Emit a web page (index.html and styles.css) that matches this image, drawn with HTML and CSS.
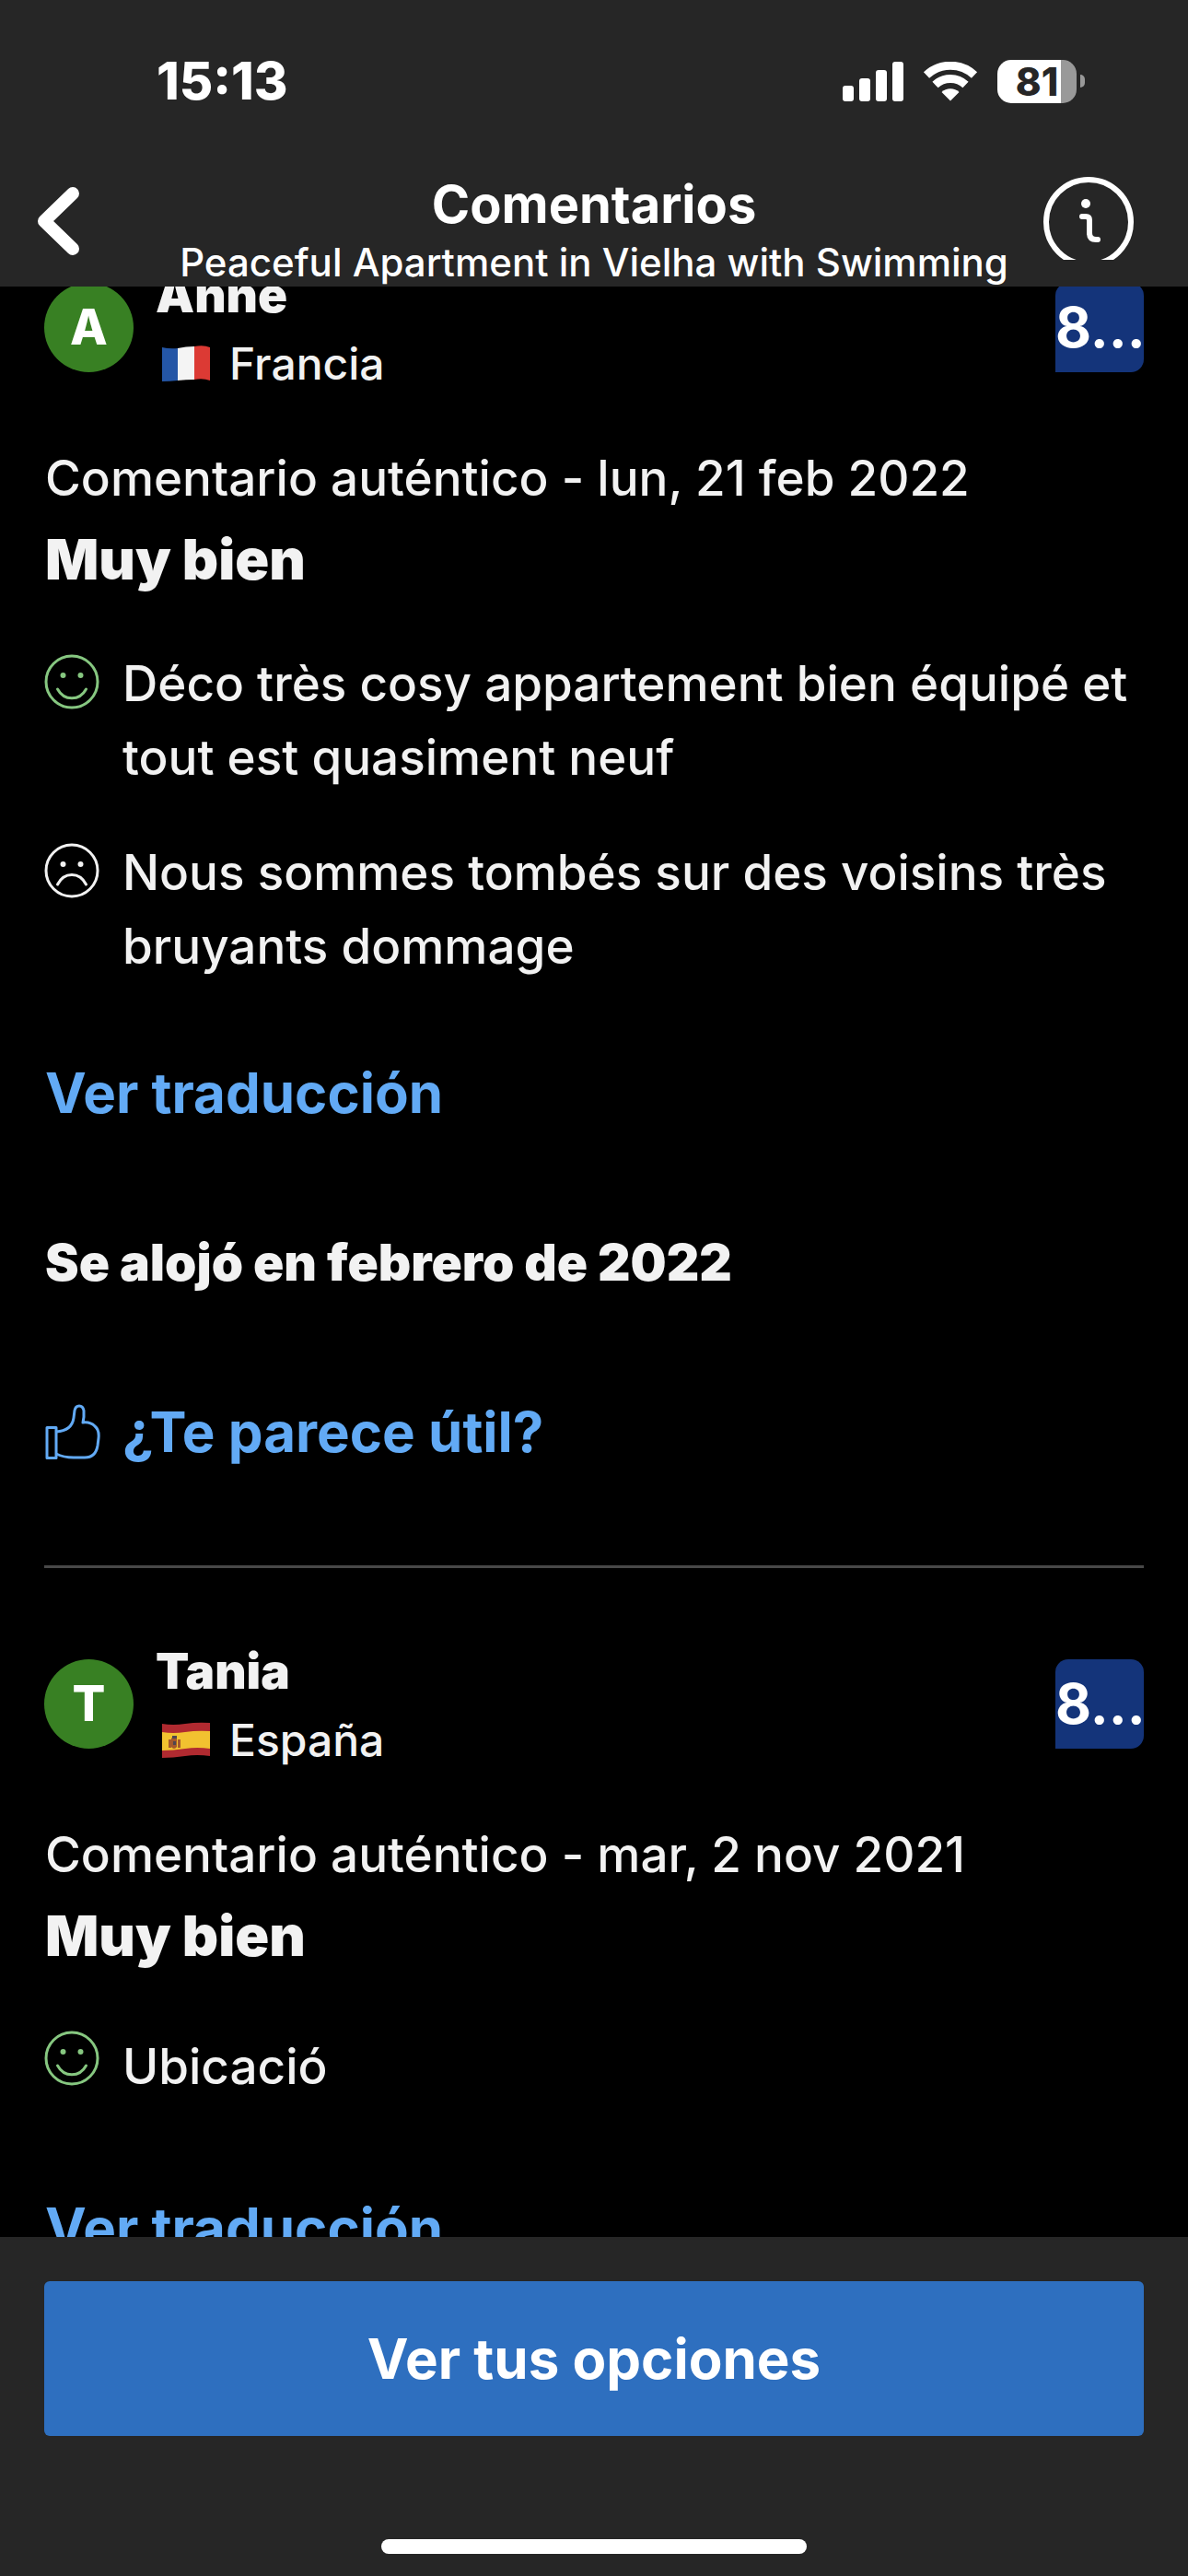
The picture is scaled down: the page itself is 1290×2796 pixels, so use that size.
FILE: index.html
```html
<!DOCTYPE html>
<html lang="es">
<head>
<meta charset="utf-8">
<meta name="viewport" content="width=device-width, initial-scale=1">
<title>Comentarios</title>
<link rel="stylesheet" href="styles.css">
</head>
<body>
<svg class="sprite" aria-hidden="true">
  <symbol id="smile" viewBox="0 0 60 60">
    <g fill="none" stroke="currentColor" stroke-width="3" stroke-linecap="round">
      <circle cx="30" cy="30" r="28"/>
      <path d="M14.500 38c7 13 24 13 31 0"/>
    </g>
    <circle cx="20.500" cy="23" r="3" fill="currentColor"/>
    <circle cx="39.500" cy="23" r="3" fill="currentColor"/>
  </symbol>
  <symbol id="frown" viewBox="0 0 60 60">
    <g fill="none" stroke="currentColor" stroke-width="3" stroke-linecap="round">
      <circle cx="30" cy="30" r="28"/>
      <path d="M14.500 45c7-14 24-14 31 0"/>
    </g>
    <circle cx="20.500" cy="23" r="3" fill="currentColor"/>
    <circle cx="39.500" cy="23" r="3" fill="currentColor"/>
  </symbol>
</svg>

<header class="top">
  <div class="status">
    <span class="status-time">15:13</span>
    <div class="status-icons">
      <svg width="66" height="43" viewBox="0 0 66 43" fill="#fff" aria-hidden="true">
        <rect x="0" y="26" width="12" height="17" rx="3"/>
        <rect x="18" y="18" width="12" height="25" rx="3"/>
        <rect x="36" y="9" width="12" height="34" rx="3"/>
        <rect x="54" y="0" width="12" height="43" rx="3"/>
      </svg>
      <svg width="60" height="43" viewBox="0 0 60 43" fill="none" stroke="#fff" stroke-width="9" aria-hidden="true">
        <path d="M4 14.500a38 38 0 0 1 52 0"/>
        <path d="M13.500 25a24 24 0 0 1 33 0"/>
        <path d="M30 42.500l-9.500-9.500a14 14 0 0 1 19 0z" fill="#fff" stroke="none"/>
      </svg>
      <div class="battery">
        <span class="battery-body">81</span>
        <span class="battery-tip"></span>
      </div>
    </div>
  </div>
  <div class="nav">
    <button class="icon-button" type="button" aria-label="Atrás">
      <svg width="52" height="90" viewBox="0 0 52 90" fill="none" stroke="#fff" stroke-width="14" stroke-linecap="round" stroke-linejoin="round"><path d="M41 18L10 48l31 30"/></svg>
    </button>
    <div class="nav-titles">
      <h1 class="nav-title">Comentarios</h1>
      <p class="nav-subtitle">Peaceful Apartment in Vielha with Swimming</p>
    </div>
    <button class="icon-button icon-button--info" type="button" aria-label="Información">
      <svg width="98" height="90" viewBox="0 0 98 90" fill="none" stroke="#fff" stroke-width="6" stroke-linecap="round"><circle cx="49" cy="49" r="46"/><circle cx="46" cy="29" r="5" fill="#fff" stroke="none"/><path d="M42 43h4q4 0 4 4v14q0 7 7 7h2"/></svg>
    </button>
  </div>
</header>

<main class="feed">
  <div class="reviews">
    <article class="review">
      <div class="author">
        <span class="avatar" aria-hidden="true">A</span>
        <div class="author-info">
          <h2 class="author-name">Anne</h2>
          <p class="author-country">
            <svg class="flag" viewBox="0 0 54 40" aria-hidden="true">
              <path fill="#2456a6" d="M1 2q8 2 17 1v35q-9 1-17 1z"/>
              <path fill="#f4f4f4" d="M18 3q9-2 18-2v36q-9 0-18 1z"/>
              <path fill="#dc3a34" d="M36 1q10-2 17 1v36q-8-3-17-1z"/>
            </svg>
            Francia
          </p>
        </div>
        <span class="score">8...</span>
      </div>
      <p class="review-date">Comentario auténtico - lun, 21 feb 2022</p>
      <h3 class="review-title">Muy bien</h3>
      <div class="opinions">
        <div class="opinion">
          <svg class="opinion-icon opinion-icon--good" aria-hidden="true"><use href="#smile"/></svg>
          <p class="opinion-text">Déco très cosy appartement bien équipé et tout est quasiment neuf</p>
        </div>
        <div class="opinion">
          <svg class="opinion-icon" aria-hidden="true"><use href="#frown"/></svg>
          <p class="opinion-text">Nous sommes tombés sur des voisins très bruyants dommage</p>
        </div>
      </div>
      <a class="link" href="#traduccion">Ver traducción</a>
      <p class="stay">Se alojó en febrero de 2022</p>
      <button class="link useful" type="button">
        <svg width="60" height="60" viewBox="0 0 60 60" fill="none" stroke="currentColor" stroke-width="3" stroke-linejoin="round" aria-hidden="true">
          <path d="M2 25.500h10v33H2z"/>
          <path d="M12 30q17-1 19-15l1-8q1-5 5-5t5 5v7l-1 6q8-1 13 4 5 4 4 13l-1 8q-2 13-14 13h-12q-11 0-19-4"/>
        </svg>
        ¿Te parece útil?
      </button>
    </article>

    <article class="review">
      <div class="author">
        <span class="avatar" aria-hidden="true">T</span>
        <div class="author-info">
          <h2 class="author-name">Tania</h2>
          <p class="author-country">
            <svg class="flag" viewBox="0 0 54 40" aria-hidden="true">
              <path fill="#b02a30" d="M1 2q12 2 25 0t27-1v36q-14-2-27 0t-25 2z"/>
              <path fill="#f2c230" d="M1 11q12 2 25 0t27-1v19q-14-2-27 0t-25 2z"/>
              <path fill="#a5582c" d="M8 19h3v9H8zM18 19h3v9h-3zM11 18q3-5 6 0v9q-3 4-6 0z"/>
              <path fill="#4f4550" d="M12 15h5v3h-5zM13 21h3v4h-3z"/>
            </svg>
            España
          </p>
        </div>
        <span class="score">8...</span>
      </div>
      <p class="review-date">Comentario auténtico - mar, 2 nov 2021</p>
      <h3 class="review-title">Muy bien</h3>
      <div class="opinions">
        <div class="opinion opinion--single">
          <svg class="opinion-icon opinion-icon--good" aria-hidden="true"><use href="#smile"/></svg>
          <p class="opinion-text">Ubicació</p>
        </div>
      </div>
      <a class="link" href="#traduccion">Ver traducción</a>
    </article>
  </div>
</main>

<footer class="bottom">
  <button class="cta" type="button">Ver tus opciones</button>
  <span class="home-bar"></span>
</footer>
</body>
</html>
```
FILE: styles.css
```css
* {
  box-sizing: border-box;
}

html,
body {
  height: 100%;
}

body {
  margin: 0;
  display: flex;
  flex-direction: column;
  overflow: hidden;
  background: #000;
  color: #f2f2f2;
  font-family: Inter, "Liberation Sans", sans-serif;
  font-size: 53px;
  font-weight: 500;
  line-height: 64px;
}

h1,
h2,
h3,
p {
  margin: 0;
}

button {
  border: 0;
  padding: 0;
  background: none;
  font: inherit;
  cursor: pointer;
}

svg {
  display: block;
  flex: none;
}

.sprite {
  position: absolute;
  width: 0;
  height: 0;
}

/* Top bar */

.top {
  flex: none;
  background: #262626;
  color: #fff;
  padding-top: 56px;
}

.status {
  display: flex;
  justify-content: space-between;
  align-items: center;
  padding: 0 112px 0 170px;
}

.status-time {
  font-size: 56px;
  font-weight: 800;
}

.status-icons {
  display: flex;
  align-items: center;
  gap: 21px;
}

.battery {
  display: flex;
  align-items: center;
  gap: 4px;
}

.battery-body {
  width: 86px;
  border-radius: 15px;
  background: linear-gradient(to right, #fff 80%, #999 80%);
  color: #262626;
  font-size: 42px;
  font-weight: 800;
  line-height: 47px;
  text-align: center;
}

.battery-tip {
  width: 5px;
  height: 14px;
  border-radius: 0 5px 5px 0;
  background: #999;
}

.nav {
  display: grid;
  grid-template-columns: 1fr auto 1fr;
  padding: 66px 38px 0;
}

.nav-titles {
  text-align: center;
}

.nav-title {
  font-size: 56px;
  font-weight: 700;
  line-height: 72px;
}

.nav-subtitle {
  font-size: 42px;
  font-weight: 500;
  line-height: 53px;
}

.icon-button {
  justify-self: start;
  align-self: start;
  margin-top: 6px;
}

.icon-button--info {
  justify-self: end;
  margin-right: 21px;
}

/* Reviews */

.feed {
  flex: 1;
  min-height: 0;
  overflow: hidden;
}

/* The list is shown part-way scrolled */
.reviews {
  margin-top: -103px;
  padding: 0 48px;
}

.review {
  padding: 72px 0 105px;
}

.review + .review {
  border-top: 3px solid #484848;
}

.author {
  display: flex;
  align-items: center;
  gap: 24px;
}

.avatar {
  flex: none;
  width: 97px;
  height: 97px;
  border-radius: 50%;
  background: #388023;
  color: #fff;
  font-weight: 800;
  line-height: 97px;
  text-align: center;
}

.author-info {
  flex: 1;
  display: flex;
  flex-direction: column;
  gap: 3px;
  padding-top: 4px;
  line-height: 72px;
}

.author-name {
  font-size: 53px;
  font-weight: 900;
}

.author-country {
  display: flex;
  align-items: center;
  gap: 20px;
  padding-left: 6px;
  font-size: 48px;
}

.flag {
  width: 54px;
  height: 40px;
}

.score {
  flex: none;
  width: 96px;
  border-radius: 14px 14px 14px 0;
  background: #14347a;
  color: #fff;
  font-size: 60px;
  font-weight: 700;
  line-height: 97px;
  text-align: center;
}

.review-date {
  margin-top: 56px;
  padding-left: 1px;
}

.review-title {
  margin-top: 20px;
  padding-left: 1px;
  font-size: 61px;
  font-weight: 900;
  line-height: 72px;
}

.opinions {
  display: flex;
  flex-direction: column;
  gap: 45px;
  margin-top: 59px;
}

.opinion {
  display: flex;
  gap: 25px;
}

.opinion-icon {
  width: 60px;
  height: 60px;
  margin-top: 8px;
}

.opinion-icon--good {
  color: #86c780;
}

.opinion-text {
  line-height: 80px;
}

.opinion--single {
  min-height: 94px;
  margin-bottom: 9px;
}

.opinion--single .opinion-text {
  align-self: center;
}

.link {
  display: block;
  margin-top: 79px;
  padding-left: 1px;
  color: #62aaf5;
  font-size: 60px;
  font-weight: 700;
  line-height: 80px;
  text-decoration: none;
}

.stay {
  margin-top: 112px;
  padding-left: 1px;
  font-size: 55px;
  font-weight: 900;
}

.useful {
  display: flex;
  align-items: center;
  gap: 24px;
  margin-top: 112px;
}

/* Bottom bar */

.bottom {
  flex: none;
  display: flex;
  flex-direction: column;
  align-items: center;
  padding: 48px 48px 24px;
  background: #262626;
}

.cta {
  width: 100%;
  border-radius: 6px;
  background: #2e6fbf;
  color: #fff;
  font-size: 60px;
  font-weight: 700;
  line-height: 168px;
}

.home-bar {
  width: 462px;
  height: 16px;
  margin-top: 112px;
  border-radius: 8px;
  background: #fff;
}
```
